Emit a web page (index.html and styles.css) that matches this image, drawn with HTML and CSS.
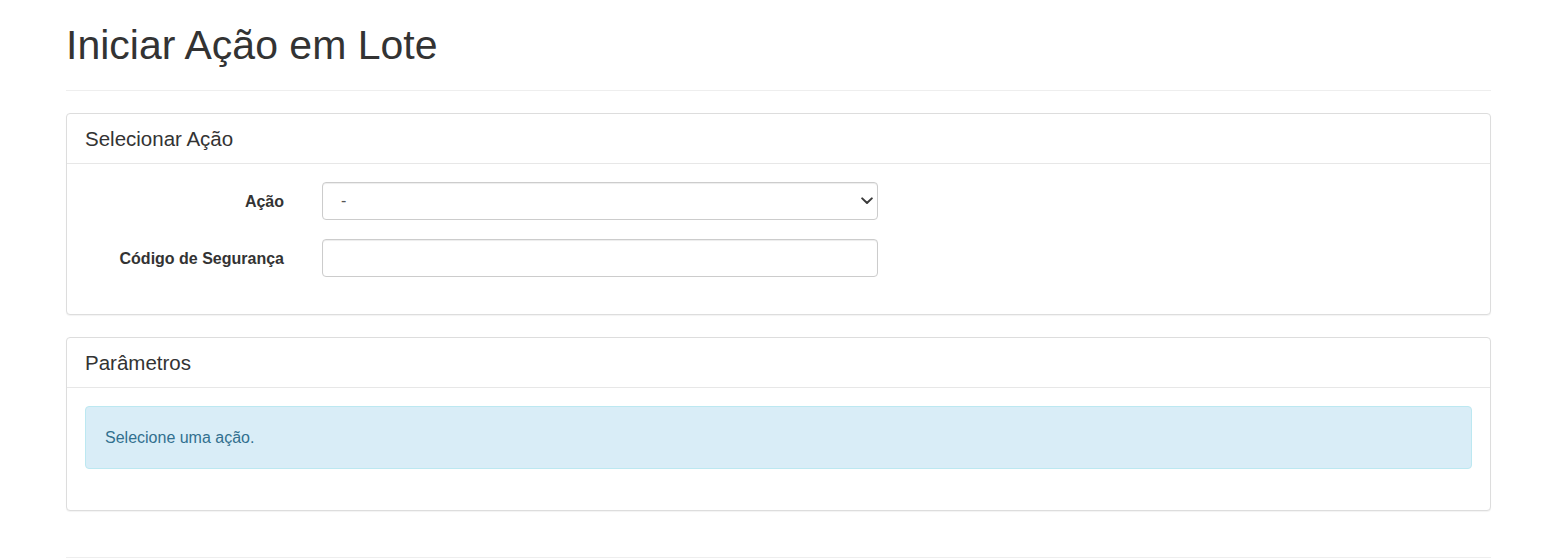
FILE: index.html
```html
<!DOCTYPE html>
<html lang="pt-BR">
<head>
<meta charset="utf-8">
<title>Iniciar Ação em Lote</title>
<link rel="stylesheet" href="styles.css">
</head>
<body>
<div class="page">
  <h1 class="page-title">Iniciar Ação em Lote</h1>

  <section class="panel">
    <div class="panel-heading"><h3 class="panel-title">Selecionar Ação</h3></div>
    <div class="panel-body">
      <form class="form-horizontal">
        <div class="form-group">
          <label class="control-label" for="acao">Ação</label>
          <div class="control-wrap">
            <select id="acao" class="form-control form-select">
              <option>-</option>
            </select>
            <svg class="select-arrow" width="12" height="8" viewBox="0 0 12 8" aria-hidden="true">
              <path d="M1.2 1.4 L6 6 L10.8 1.4" fill="none" stroke="#3a3a3a" stroke-width="2" stroke-linecap="round" stroke-linejoin="round"/>
            </svg>
          </div>
        </div>
        <div class="form-group">
          <label class="control-label" for="codigo">Código de Segurança</label>
          <div class="control-wrap">
            <input id="codigo" class="form-control" type="text">
          </div>
        </div>
      </form>
    </div>
  </section>

  <section class="panel">
    <div class="panel-heading"><h3 class="panel-title">Parâmetros</h3></div>
    <div class="panel-body">
      <div class="alert alert-info">Selecione uma ação.</div>
    </div>
  </section>

  <div class="footer-rule"></div>
</div>
</body>
</html>
```

FILE: styles.css
```css
* { box-sizing: border-box; }

html, body {
  margin: 0;
  padding: 0;
  background: #fff;
}

body {
  font-family: "Liberation Sans", Arial, Helvetica, sans-serif;
  font-size: 16px;
  line-height: 1.42857;
  color: #333;
}

.page {
  width: 1425px;
  margin-left: 66px;
  padding-top: 23px;
  display: flex;
  flex-direction: column;
}

.page-title {
  margin: 0 0 22px 0;
  padding-bottom: 22px;
  font-size: 41px;
  line-height: 45px;
  font-weight: 400;
  color: #333;
  border-bottom: 1px solid #eee;
}

.panel {
  background: #fff;
  border: 1px solid #ddd;
  border-radius: 4px;
  box-shadow: 0 1px 1px rgba(0, 0, 0, 0.05);
  margin-bottom: 22px;
}

.panel-heading {
  padding: 12px 18px 11px 18px;
  border-bottom: 1px solid #e7e7e7;
  height: 50px;
}

.panel-title {
  margin: 0;
  font-size: 20.5px;
  line-height: 26px;
  font-weight: 400;
  color: #333;
}

.panel-body {
  padding: 18px;
}

.form-horizontal {
  display: flex;
  flex-direction: column;
  gap: 19px;
  padding-bottom: 19px;
}

.form-group {
  display: flex;
  align-items: center;
  gap: 38px;
}

.control-label {
  width: 199px;
  text-align: right;
  font-weight: 700;
  font-size: 16px;
  color: #333;
  padding-top: 2px;
}

.control-wrap {
  position: relative;
  width: 556px;
}

.form-control {
  display: block;
  width: 100%;
  height: 38px;
  padding: 6px 13px;
  font-family: inherit;
  font-size: 16px;
  line-height: 1.42857;
  color: #555;
  background-color: #fff;
  border: 1px solid #ccc;
  border-radius: 4px;
  box-shadow: inset 0 1px 1px rgba(0, 0, 0, 0.075);
}

.form-select {
  -webkit-appearance: none;
  appearance: none;
  padding-left: 18px;
  padding-right: 30px;
}

.select-arrow {
  position: absolute;
  right: 5px;
  top: 15px;
  pointer-events: none;
}

.alert {
  padding: 19px 19px 18px 19px;
  margin-bottom: 23px;
  border: 1px solid #bce8f1;
  border-radius: 4px;
  background-color: #d9edf7;
  color: #31708f;
  font-size: 16px;
  line-height: 24px;
}

.footer-rule {
  margin-top: 24px;
  border-top: 1px solid #eee;
  height: 1px;
}
```
